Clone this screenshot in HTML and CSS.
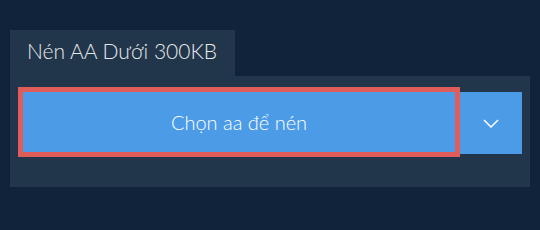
FILE: index.html
```html
<!DOCTYPE html>
<html lang="vi">
<head>
    <meta charset="UTF-8">
    <meta name="viewport" content="width=device-width, initial-scale=1.0">
    <title>Nén AA Dưới 300KB</title>
    <link rel="stylesheet" href="styles.css">
</head>
<body>
    <div class="tabs">
        <div class="tab">Nén AA Dưới 300KB</div>
    </div>
    <div class="panel">
        <div class="button-row">
            <button class="choose-btn">Chọn aa để nén</button>
            <button class="dropdown-btn" aria-label="Thêm lựa chọn">
                <svg width="16" height="9" viewBox="0 0 16 9">
                    <polyline points="1,1 8,8 15,1" fill="none" stroke="white" stroke-width="1.5"/>
                </svg>
            </button>
        </div>
    </div>
</body>
</html>
```

FILE: styles.css
```css
body {
    font-family: Lato, "Noto Sans", sans-serif;
    background-color: #10233a;
    margin: 0;
    padding: 30px 10px 0 10px;
}

.tabs {
    display: flex;
}

.tab {
    background-color: #22364b;
    color: #e6e9ec;
    font-size: 21px;
    font-weight: 300;
    width: 225px;
    height: 46px;
    box-sizing: border-box;
    padding: 8px 0 0 17px;
}

.panel {
    background-color: #22364b;
    padding: 11px 8px 30px 8px;
}

.button-row {
    display: flex;
    align-items: flex-start;
}

.choose-btn {
    flex: 1;
    height: 70px;
    background-color: #4c9be7;
    color: white;
    font-family: Lato, "Noto Sans", sans-serif;
    font-size: 20px;
    font-weight: 300;
    border: 5px solid #e05c5a;
    padding: 0;
    cursor: pointer;
}

.dropdown-btn {
    width: 62px;
    height: 62px;
    margin-top: 5px;
    background-color: #4c9be7;
    border: none;
    padding: 0;
    display: flex;
    justify-content: center;
    align-items: center;
    cursor: pointer;
}
```
